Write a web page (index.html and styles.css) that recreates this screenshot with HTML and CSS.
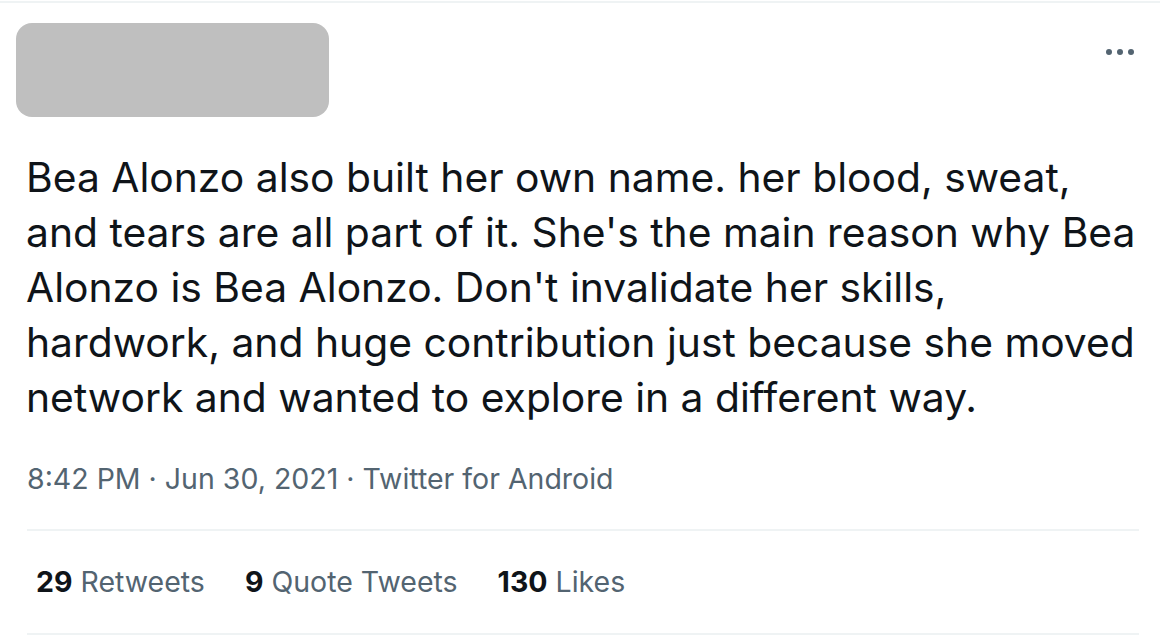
FILE: index.html
```html
<!DOCTYPE html>
<html lang="en">
<head>
<meta charset="utf-8">
<title>Tweet</title>
<link rel="stylesheet" href="styles.css">
</head>
<body>
<article class="tweet">
  <header class="head">
    <div class="redact"></div>
    <svg class="more" width="28" height="12" viewBox="0 0 28 12" aria-label="More">
      <circle cx="3" cy="6" r="3"/>
      <circle cx="14" cy="6" r="3"/>
      <circle cx="25" cy="6" r="3"/>
    </svg>
  </header>
  <div class="body">
    <p class="text">Bea Alonzo also built her own name. her blood, sweat,<br>and tears are all part of it. She's the main reason why Bea<br>Alonzo is Bea Alonzo. Don't invalidate her skills,<br>hardwork, and huge contribution just because she moved<br>network and wanted to explore in a different way.</p>
    <div class="meta">8:42 PM · Jun 30, 2021 · Twitter for Android</div>
    <div class="stats">
      <span class="stat"><b>29</b> Retweets</span>
      <span class="stat"><b>9</b> Quote Tweets</span>
      <span class="stat"><b>130</b> Likes</span>
    </div>
  </div>
</article>
</body>
</html>
```

FILE: styles.css
```css
html, body {
  margin: 0;
  padding: 0;
  background: #ffffff;
}

body {
  font-family: Inter, "Liberation Sans", Arial, sans-serif;
  color: #0f1419;
}

.tweet {
  margin-top: 1px;
  border-top: 2px solid #eff3f4;
}

.head {
  display: flex;
  justify-content: space-between;
  align-items: flex-start;
  padding: 20px 26px 0 16px;
}

.redact {
  width: 313px;
  height: 94px;
  background: #bfbfbf;
  border-radius: 16px;
}

.more {
  display: block;
  margin-top: 23px;
  fill: #536471;
}

.body {
  padding: 0 21px 0 27px;
}

.text {
  margin: 33px 0 0 -1px;
  font-size: 40.8px;
  line-height: 55px;
  color: #0f1419;
  white-space: nowrap;
}

.meta {
  margin-top: 34px;
  padding-bottom: 30px;
  font-size: 28.5px;
  line-height: 40px;
  color: #536471;
}

.stats {
  display: flex;
  gap: 40px;
  padding: 31px 0 31px 9px;
  border-top: 2px solid #eff3f4;
  border-bottom: 2px solid #eff3f4;
  font-size: 28.5px;
  line-height: 40px;
  color: #536471;
}

.stat b {
  font-weight: 700;
  color: #0f1419;
}
```
